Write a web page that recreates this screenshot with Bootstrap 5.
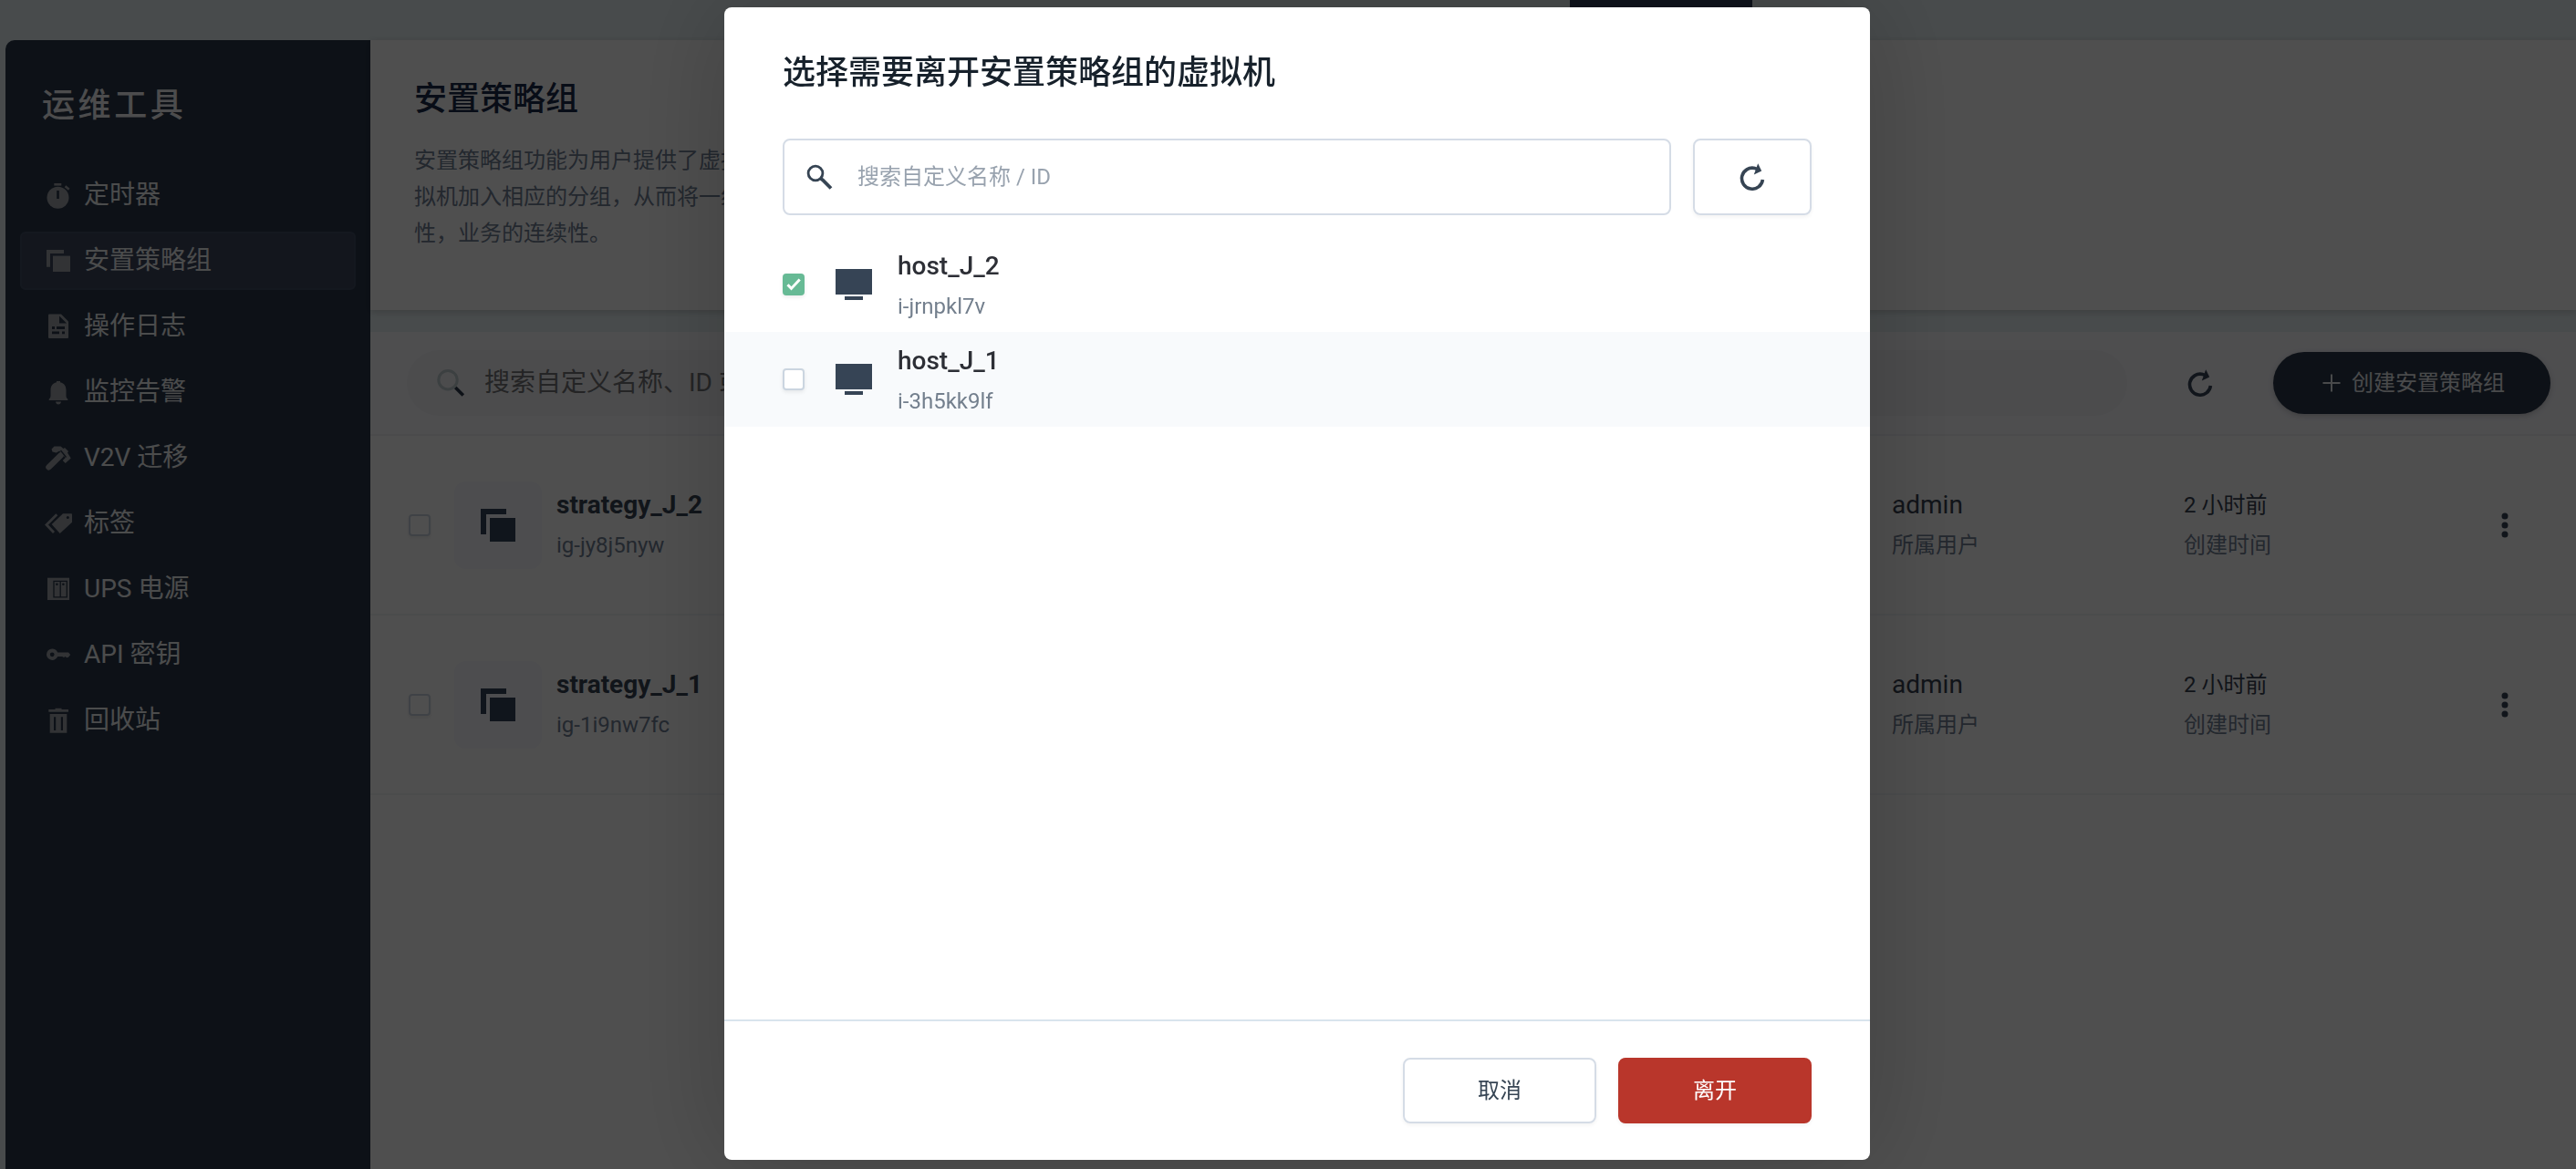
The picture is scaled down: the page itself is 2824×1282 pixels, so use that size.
<!DOCTYPE html>
<html lang="zh-CN">
<head>
<meta charset="utf-8">
<meta name="viewport" content="width=device-width, initial-scale=1">
<title>安置策略组</title>
<link href="https://cdn.jsdelivr.net/npm/bootstrap@5.3.0/dist/css/bootstrap.min.css" rel="stylesheet">
<style>
  body {
    font-family: Roboto, "Noto Sans CJK SC", sans-serif;
    font-size: 24px;
    line-height: 40px;
    color: #374151;
    background: #e8f2f5;
    overflow: hidden;
  }
  svg { display: block; flex: none; overflow: visible; }
  .topbar { height: 44px; padding-right: 903px; }
  .topbar-tab { width: 200px; background: #2f3c58; }
  .shell { padding-left: 6px; min-height: 0; }

  .sidebar { width: 400px; background: #2b384b; border-top-left-radius: 10px; padding: 46px 16px 0; }
  .sidebar-title { font-size: 36px; line-height: 52px; letter-spacing: .1em; font-weight: 500; color: #f4f6f8; padding-left: 24px; margin-bottom: 40px; }
  .side-link { height: 64px; padding: 0 24px; gap: 14px; font-size: 28px; color: #f2f4f6; border: 2px solid transparent; border-radius: 6px; }
  .side-link:hover { color: #fff; }
  .side-link.active { background: #3d475f; border-color: #434e65; }
  .side-link svg { color: #a0a5ac; --hole: #2b384b; }

  .page-head { background: #fff; padding: 38px 48px 64px; height: 296px; box-shadow: 0 2px 8px rgba(0,0,0,.18); position: relative; }
  .page-head h1 { font-size: 36px; line-height: 54px; font-weight: 500; color: #1c2b4a; margin: 0 0 20px; }
  .page-head p { color: #718096; margin: 0; }
  .list-area { background: #e8f2f5; }
  .panel { margin-top: 24px; background: #fff; }
  .toolbar { background: #fafaff; padding: 20px 28px 20px 40px; gap: 50px; border-bottom: 2px solid #f0f2f6; }
  .pill-search { height: 72px; border-radius: 36px; background: #f4f5f8; padding: 0 33px; gap: 22px; }
  .bare-input { border: 0; background: transparent; padding: 0; min-width: 0; outline: 0; }
  .pill-search .bare-input { font-size: 28px; }
  .pill-search .bare-input::placeholder { color: #747678; opacity: 1; }
  .icon-btn { width: 60px; height: 60px; padding: 0; color: #374557; }
  .create-btn { width: 304px; height: 68px; padding: 0 10px 0 14px; border: 0; border-radius: 34px; background: #2b384b; color: #eceff3; font-size: 24px; gap: 12px; box-shadow: 0 2px 6px rgba(0,0,0,.2); }
  .create-btn:hover { background: #374151; color: #fff; }

  .group-row { height: 197px; padding: 0 58px 0 42px; border-bottom: 2px solid #f2f4f6; }
  .tick { appearance: none; flex: none; width: 24px; height: 24px; margin: 0; border: 2px solid #cbd5e0; border-radius: 4px; background-color: #fff; box-shadow: 0 2px 4px rgba(0,0,0,.08); }
  .tick:checked { border-color: #67ba95; background: #67ba95 url("data:image/svg+xml,%3Csvg xmlns='http://www.w3.org/2000/svg' viewBox='0 0 20 20'%3E%3Cpath d='M3.5 10.2l4 4.2 9.2-10' fill='none' stroke='white' stroke-width='3'/%3E%3C/svg%3E") center / 100% no-repeat; }
  .group-tile { width: 96px; height: 96px; border-radius: 12px; background: #f8f9ff; margin: 0 16px 0 26px; }
  .group-name { font-size: 28px; font-weight: 700; color: #374454; }
  .sub { color: #718096; }
  .cell-line { line-height: 44px; }
  .col-owner { width: 320px; flex: none; }
  .col-time { width: 332px; flex: none; }
  .owner { font-size: 28px; }
  .more-btn { width: 40px; height: 48px; padding: 0; color: #374557; }

  .leave-modal { padding-left: 20px; background: rgba(0,0,0,.69); overflow: hidden; }
  .leave-modal .modal-dialog { max-width: 1256px; height: calc(100vh - 18px); margin: 8px auto 10px; }
  .leave-modal .modal-content { height: 100%; border: 0; border-radius: 8px; box-shadow: 0 0 120px rgba(0,0,0,.2); }
  .leave-modal .modal-header { border: 0; padding: 44px 64px 44px; }
  .leave-modal .modal-title { font-size: 36px; line-height: 56px; font-weight: 500; color: #17212b; }
  .leave-modal .modal-body { padding: 0; }
  .search-line { padding: 0 64px 24px; gap: 24px; }
  .search-box { height: 84px; border: 2px solid #d5dce6; border-radius: 8px; padding: 0 24px; gap: 28px; color: #364453; }
  .search-box .bare-input::placeholder { color: #98a2ae; opacity: 1; }
  .refresh-btn { width: 130px; height: 84px; border: 2px solid #d5dce6; border-radius: 8px; color: #364453; box-shadow: 0 2px 4px rgba(0,0,0,.05); }
  .host-row { height: 104px; padding: 0 64px; }
  .host-row:nth-child(even) { background: #f8fafc; }
  .host-icon { margin: 0 28px 0 34px; color: #364455; }
  .host-text { padding-top: 6px; }
  .host-name { font-size: 28px; font-weight: 500; line-height: 42px; color: #2d2f36; }
  .host-id { line-height: 46px; color: #737f8d; }
  .leave-modal .modal-footer { padding: 40px 64px; gap: 24px; border-top: 2px solid #d9e4ed; }
  .leave-modal .modal-footer > * { margin: 0; }
  .foot-btn { width: 212px; height: 72px; font-size: 24px; border: 2px solid #d5dce6; border-radius: 8px; color: #364453; box-shadow: 0 2px 4px rgba(0,0,0,.05); }
  .foot-btn.danger { background: #b9362b; border-color: #b9362b; color: #fff; }
</style>
</head>
<body class="d-flex flex-column vh-100">
<svg class="d-none" aria-hidden="true">
  <symbol id="i-refresh" viewBox="0 0 30 30">
    <path d="M26.4 18A11.5 11.5 0 1 1 18 5.6L20 6.3" fill="none" stroke="currentColor" stroke-width="3.6"/>
    <path d="M21.2.3l4 8.2-8.4 4z" fill="currentColor"/>
  </symbol>
  <symbol id="i-group" viewBox="0 0 38 36">
    <path d="M0 0h28v6H6v22H0z" fill="currentColor"/>
    <path d="M10 10h28v26H10z" fill="currentColor"/>
  </symbol>
  <symbol id="i-dots" viewBox="0 0 8 28">
    <g fill="currentColor"><circle cx="4" cy="4" r="3.5"/><circle cx="4" cy="14" r="3.5"/><circle cx="4" cy="24" r="3.5"/></g>
  </symbol>
  <symbol id="i-screen" viewBox="0 0 40 34">
    <path d="M0 0h40v28H0zM10 30h20v4H10z" fill="currentColor"/>
  </symbol>
</svg>

<header class="topbar d-flex flex-shrink-0 justify-content-end"><div class="topbar-tab"></div></header>
<div class="shell d-flex flex-grow-1">
  <aside class="sidebar flex-shrink-0">
    <div class="sidebar-title">运维工具</div>
    <nav class="nav flex-column flex-nowrap gap-2">
      <a class="nav-link side-link d-flex align-items-center" href="#">
        <svg width="30" height="30" viewBox="0 0 30 30" fill="currentColor"><circle cx="15.5" cy="17.7" r="12"/><path d="M11.3 2h8v2.6h-8z"/><path d="M23.5 5.3l4.2 3.4" stroke="currentColor" stroke-width="2.6"/><path d="M14.2 10h2.6v9h-2.6z" fill="var(--hole)"/></svg>
        定时器</a>
      <a class="nav-link side-link active d-flex align-items-center" href="#" aria-current="page">
        <svg width="30" height="30" viewBox="0 0 30 30" fill="currentColor"><path d="M3 3h19v4H7v14.7H3z"/><path d="M10 9.6h19V27H10z"/></svg>
        安置策略组</a>
      <a class="nav-link side-link d-flex align-items-center" href="#">
        <svg width="30" height="30" viewBox="0 0 30 30" fill="currentColor"><path d="M6 1.5h13l8 8V27q0 1-1 1H6q-1 0-1-1V2.500q0-1 1-1z"/><path d="M17 3.500l8 8h-8zM9 15h3v3H9zM14 15h9v3h-9zM9 20.500h8v2.700H9zM20 20.500h3v2.700h-3z" fill="var(--hole)"/></svg>
        操作日志</a>
      <a class="nav-link side-link d-flex align-items-center" href="#">
        <svg width="30" height="30" viewBox="0 0 30 30" fill="currentColor"><path d="M14 3h4v1.300c4.600 1 6.500 4.500 6.500 8.700v6c0 2 .8 3 1.800 3.700V24H5.700v-1.300C6.700 22 7.500 21 7.500 19v-6c0-4.200 1.900-7.700 6.500-8.700zM13 25.500h6q-.5 3-3 3t-3-3z"/></svg>
        监控告警</a>
      <a class="nav-link side-link d-flex align-items-center" href="#">
        <svg width="30" height="30" viewBox="0 0 30 30" fill="currentColor"><path d="M5.500 25.200L18.500 12.500" stroke="currentColor" stroke-width="6.500" stroke-linecap="round"/><path d="M8.500 5.500L11.500 2.600h7l3 2.400 1.500-1 4 4-1 1.500 3.700 6-6 5.500-3-3 3-3-6.500-7.500-3.500 2-4.200-1z"/><path d="M18.500 7l6 7.500" stroke="var(--hole)" stroke-width="1.300"/></svg>
        V2V 迁移</a>
      <a class="nav-link side-link d-flex align-items-center" href="#">
        <svg width="30" height="30" viewBox="0 0 30 30" fill="currentColor"><path d="M8.700 16L21 4.300h9q1 0 1 1v8.400L17.700 26z"/><path d="M14.300 5.300L3 16.500l8 8.500" fill="none" stroke="currentColor" stroke-width="2.800"/><circle cx="26.300" cy="8.500" r="1.500" fill="var(--hole)"/></svg>
        标签</a>
      <a class="nav-link side-link d-flex align-items-center" href="#">
        <svg width="30" height="30" viewBox="0 0 30 30" fill="currentColor"><path d="M4 2.700h24V27H4z"/><path d="M11 6.300h14.300v17.500H11zM18.200 6.300v17.500" fill="none" stroke="var(--hole)" stroke-width="1.300"/><circle cx="14.400" cy="9.800" r="1.300" fill="var(--hole)"/><circle cx="21.400" cy="9.800" r="1.300" fill="var(--hole)"/></svg>
        UPS 电源</a>
      <a class="nav-link side-link d-flex align-items-center" href="#">
        <svg width="30" height="30" viewBox="0 0 30 30" fill="currentColor"><path fill-rule="evenodd" d="M9.200 8.500c2.700 0 5 1.600 6 3.900H27l2.200 2.700-2.200 2.600-1.700.5-1.800-1.200-1.500.9-1.800-1h-5c-1 2.300-3.300 4-6 4a6.200 6.200 0 0 1 0-12.400zm0 3.900a2.400 2.400 0 1 0 0 4.800 2.400 2.400 0 0 0 0-4.800z"/></svg>
        API 密钥</a>
      <a class="nav-link side-link d-flex align-items-center" href="#">
        <svg width="30" height="30" viewBox="0 0 30 30" fill="currentColor"><path d="M12.500 1.700h7V3h7.500v2.700H5.300V3h7.200zM6.700 8h18.600v20.700H6.700z"/><path d="M11 11.300h2.200V26H11zM18.800 11.300H21V26h-2.200z" fill="var(--hole)"/></svg>
        回收站</a>
    </nav>
  </aside>

  <main class="flex-grow-1 bg-white">
    <section class="page-head">
      <h1>安置策略组</h1>
      <p>安置策略组功能为用户提供了虚拟机<br>拟机加入相应的分组，从而将一组<br>性，业务的连续性。</p>
    </section>
    <div class="list-area overflow-hidden">
      <section class="panel">
        <div class="toolbar d-flex align-items-center">
          <label class="pill-search d-flex align-items-center flex-grow-1">
            <svg width="30" height="30" viewBox="0 0 30 30" fill="none"><circle cx="12" cy="11.700" r="10.200" stroke="#c2cdd2" stroke-width="3"/><path d="M20.300 20l8.500 8.500" stroke="#2b384b" stroke-width="3.600"/></svg>
            <input class="bare-input flex-grow-1" type="search" aria-label="搜索" placeholder="搜索自定义名称、ID 或">
          </label>
          <button class="btn icon-btn d-flex align-items-center justify-content-center" type="button" aria-label="刷新"><svg width="30" height="30"><use href="#i-refresh"/></svg></button>
          <button class="btn create-btn d-flex align-items-center justify-content-center" type="button">
            <svg width="20" height="20" viewBox="0 0 20 20"><path d="M10 .5v19M.5 10h19" stroke="currentColor" stroke-width="2"/></svg>
            创建安置策略组</button>
        </div>
        <div class="group-row d-flex align-items-center">
          <input class="tick" type="checkbox" aria-label="strategy_J_2">
          <div class="group-tile d-flex align-items-center justify-content-center"><svg width="38" height="36" color="#36445a"><use href="#i-group"/></svg></div>
          <div class="flex-grow-1"><div class="group-name cell-line">strategy_J_2</div><div class="sub cell-line">ig-jy8j5nyw</div></div>
          <div class="col-owner"><div class="owner cell-line">admin</div><div class="sub cell-line">所属用户</div></div>
          <div class="col-time"><div class="cell-line">2 小时前</div><div class="sub cell-line">创建时间</div></div>
          <button class="btn more-btn d-flex align-items-center justify-content-center" type="button" aria-label="更多"><svg width="8" height="28"><use href="#i-dots"/></svg></button>
        </div>
        <div class="group-row d-flex align-items-center">
          <input class="tick" type="checkbox" aria-label="strategy_J_1">
          <div class="group-tile d-flex align-items-center justify-content-center"><svg width="38" height="36" color="#36445a"><use href="#i-group"/></svg></div>
          <div class="flex-grow-1"><div class="group-name cell-line">strategy_J_1</div><div class="sub cell-line">ig-1i9nw7fc</div></div>
          <div class="col-owner"><div class="owner cell-line">admin</div><div class="sub cell-line">所属用户</div></div>
          <div class="col-time"><div class="cell-line">2 小时前</div><div class="sub cell-line">创建时间</div></div>
          <button class="btn more-btn d-flex align-items-center justify-content-center" type="button" aria-label="更多"><svg width="8" height="28"><use href="#i-dots"/></svg></button>
        </div>
      </section>
    </div>
  </main>
</div>

<div class="modal leave-modal d-block" tabindex="-1" role="dialog" aria-labelledby="leaveTitle">
  <div class="modal-dialog">
    <div class="modal-content">
      <div class="modal-header"><h2 class="modal-title" id="leaveTitle">选择需要离开安置策略组的虚拟机</h2></div>
      <div class="modal-body">
        <div class="search-line d-flex">
          <label class="search-box d-flex align-items-center flex-grow-1">
            <svg width="28" height="28" viewBox="0 0 28 28" fill="none" stroke="currentColor"><circle cx="10" cy="10" r="7.900" stroke-width="2.800"/><path d="M16 16l2 1.500 9 9" stroke-width="3.800"/></svg>
            <input class="bare-input flex-grow-1" type="search" aria-label="搜索虚拟机" placeholder="搜索自定义名称 / ID">
          </label>
          <button class="btn refresh-btn d-flex align-items-center justify-content-center" type="button" aria-label="刷新"><svg width="30" height="30"><use href="#i-refresh"/></svg></button>
        </div>
        <div>
          <label class="host-row d-flex align-items-center">
            <input class="tick" type="checkbox" checked>
            <svg class="host-icon" width="40" height="34"><use href="#i-screen"/></svg>
            <span class="host-text"><span class="host-name d-block">host_J_2</span><span class="host-id d-block">i-jrnpkl7v</span></span>
          </label>
          <label class="host-row d-flex align-items-center">
            <input class="tick" type="checkbox">
            <svg class="host-icon" width="40" height="34"><use href="#i-screen"/></svg>
            <span class="host-text"><span class="host-name d-block">host_J_1</span><span class="host-id d-block">i-3h5kk9lf</span></span>
          </label>
        </div>
      </div>
      <div class="modal-footer">
        <button class="btn foot-btn" type="button">取消</button>
        <button class="btn foot-btn danger" type="button">离开</button>
      </div>
    </div>
  </div>
</div>
<script src="https://cdn.jsdelivr.net/npm/bootstrap@5.3.0/dist/js/bootstrap.bundle.min.js"></script>
</body>
</html>
